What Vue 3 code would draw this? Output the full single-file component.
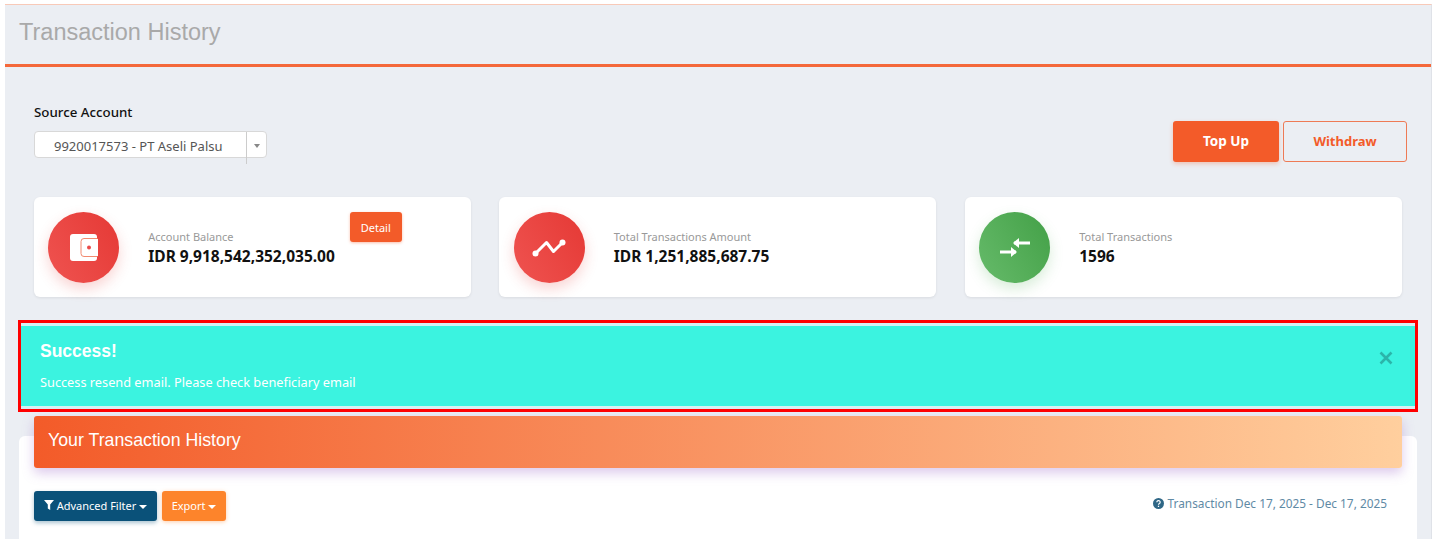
<script setup>
const stats = [
  { label: "Account Balance", value: "IDR 9,918,542,352,035.00", tone: "red", icon: "wallet", detail: true },
  { label: "Total Transactions Amount", value: "IDR 1,251,885,687.75", tone: "red", icon: "line" },
  { label: "Total Transactions", value: "1596", tone: "green", icon: "swap" },
];
</script>

<template>
  <div class="page">
    <div class="frame">
      <header class="top-bar">
        <h1>Transaction History</h1>
      </header>

      <section class="source-row">
        <div class="source">
          <label>Source Account</label>
          <div class="select">
            <span class="select-text">9920017573 - PT Aseli Palsu</span>
            <span class="select-arrow"><i></i></span>
          </div>
        </div>
        <div class="actions">
          <button class="btn-top">Top Up</button>
          <button class="btn-withdraw">Withdraw</button>
        </div>
      </section>

      <section class="stats">
        <div v-for="s in stats" :key="s.label" class="stat-card">
          <div class="stat-icon" :class="s.tone">
            <svg v-if="s.icon === 'wallet'" width="28" height="27" viewBox="0 0 28 27">
              <rect x="0" y="0" width="27" height="27" rx="3" fill="#fff" />
              <path d="M27.500 4.500H14a3 3 0 0 0-3 3v12a3 3 0 0 0 3 3h13.500" fill="none" stroke="#f28a70" stroke-width="1" />
              <rect x="27" y="5" width="1" height="17" fill="#fff" />
              <circle cx="19" cy="13.500" r="2" fill="#ea4a4a" />
            </svg>
            <svg v-else-if="s.icon === 'line'" width="34" height="20" viewBox="0 0 34 20">
              <polyline points="3.500,15.500 14.500,4.500 21.500,13.500 30.500,4.500" fill="none" stroke="#fff" stroke-width="3" stroke-linejoin="round" />
              <circle cx="3.500" cy="15.500" r="3" fill="#fff" />
              <circle cx="30.500" cy="4.500" r="3" fill="#fff" />
            </svg>
            <svg v-else width="32" height="22" viewBox="0 0 32 22">
              <path d="M31 6H15" fill="none" stroke="#fff" stroke-width="3" />
              <path d="M14 6l6-5v10z" fill="#fff" />
              <path d="M1 15h16" fill="none" stroke="#fff" stroke-width="3" />
              <path d="M18 15l-6-5v10z" fill="#fff" />
            </svg>
          </div>
          <div class="stat-body">
            <span class="stat-label">{{ s.label }}</span>
            <strong class="stat-value">{{ s.value }}</strong>
          </div>
          <button v-if="s.detail" class="btn-detail">Detail</button>
        </div>
      </section>

      <section class="alert-wrap">
        <div class="alert">
          <div class="alert-inner">
            <div>
              <h4>Success!</h4>
              <p>Success resend email. Please check beneficiary email</p>
            </div>
            <svg class="alert-close" width="14" height="14" viewBox="0 0 14 14">
              <path d="M1.500 1.500l11 11M12.500 1.500l-11 11" stroke="#2bb5aa" stroke-width="2.600" fill="none" />
            </svg>
          </div>
        </div>
      </section>

      <section class="history">
        <div class="history-title">Your Transaction History</div>
        <div class="history-card">
          <div class="tools">
            <div class="tool-buttons">
              <button class="btn-filter">
                <svg width="10" height="10" viewBox="0 0 10 10">
                  <path d="M0 0h10L6.200 4.500V10L3.800 8.500V4.500z" fill="#fff" />
                </svg>
                Advanced Filter <i class="caret"></i>
              </button>
              <button class="btn-export">Export <i class="caret"></i></button>
            </div>
            <div class="period">
              <svg width="11" height="11" viewBox="0 0 12 12">
                <circle cx="6" cy="6" r="6" fill="#2f6786" />
                <path d="M4.200 4.600a1.800 1.800 0 1 1 2.800 1.500c-.7.400-1 .7-1 1.300" fill="none" stroke="#fff" stroke-width="1.300" />
                <rect x="5.300" y="8.400" width="1.400" height="1.400" fill="#fff" />
              </svg>
              <span>Transaction Dec 17, 2025 - Dec 17, 2025</span>
            </div>
          </div>
        </div>
      </section>
    </div>
  </div>
</template>

<style>
html,
body {
  margin: 0;
  background: #fff;
  overflow: hidden;
}
</style>

<style scoped>
.page {
  height: 544px;
  padding: 4px 2px 6px 5px;
  box-sizing: border-box;
  font-family: "Noto Sans", sans-serif;
  overflow: hidden;
}

.frame {
  height: 534px;
  background: #ebeef3;
  border-top: 1px solid #f8c9b8;
  border-right: 1px solid #dfe2e8;
  overflow: hidden;
}

.top-bar {
  height: 59px;
  border-bottom: 3px solid #f4683a;
  display: flex;
  align-items: center;
}

.top-bar h1 {
  margin: 0 0 4px 14px;
  font-family: "Liberation Sans", sans-serif;
  font-weight: 400;
  font-size: 23.500px;
  color: #a9a9a9;
}

.source-row {
  display: flex;
  justify-content: space-between;
  padding: 36px 24px 0 29px;
  height: 95px;
  box-sizing: border-box;
}

.source label {
  display: block;
  font-size: 13.300px;
  font-weight: 500;
  line-height: 18px;
  color: #111;
  margin-bottom: 10px;
}

.select {
  width: 233px;
  height: 27px;
  background: #fff;
  border: 1px solid #d8d8d8;
  border-radius: 4px;
  box-sizing: border-box;
  display: flex;
  align-items: center;
}

.select-text {
  flex: 1;
  padding: 2px 0 0 19px;
  font-size: 13px;
  color: #555;
  white-space: nowrap;
}

.select-arrow {
  width: 20px;
  height: 32px;
  border-left: 1px solid #ccc;
  display: flex;
  justify-content: center;
  padding-top: 10px;
  box-sizing: border-box;
  align-self: flex-start;
}

.select-arrow i {
  width: 0;
  height: 0;
  margin-top: 2px;
  border-left: 3.500px solid transparent;
  border-right: 3.500px solid transparent;
  border-top: 4px solid #888;
}

.actions {
  display: flex;
  gap: 4px;
  padding-top: 18px;
  align-items: flex-start;
}

.actions button {
  height: 41px;
  padding-bottom: 2px;
  font-family: "Noto Sans", sans-serif;
  font-size: 13px;
  font-weight: 700;
  border-radius: 3px;
  cursor: pointer;
}

.actions .btn-top {
  width: 106px;
  background: #f35b29;
  color: #fff;
  border: none;
  font-size: 13.500px;
  box-shadow: 0 2px 4px rgba(244, 93, 43, 0.3);
}

.btn-withdraw {
  width: 124px;
  background: transparent;
  color: #f35b29;
  border: 1px solid #ee7a55;
}

.stats {
  display: grid;
  grid-template-columns: repeat(3, 437px);
  column-gap: 28.500px;
  margin: 35px 0 0 28.750px;
}

.stat-card {
  height: 100px;
  background: #fff;
  border-radius: 6px;
  box-shadow: 0 1px 3px rgba(0, 0, 0, 0.08);
  padding: 15px 14.500px;
  box-sizing: border-box;
  display: flex;
  position: relative;
}

.stat-icon {
  width: 71px;
  height: 71px;
  border-radius: 50%;
  flex-shrink: 0;
  display: flex;
  align-items: center;
  justify-content: center;
}

.stat-icon.red {
  background: linear-gradient(60deg, #ef5350, #e53935);
  box-shadow: 0 6px 14px rgba(229, 57, 53, 0.22);
}

.stat-icon.green {
  background: linear-gradient(60deg, #66bb6a, #43a047);
  box-shadow: 0 6px 14px rgba(76, 175, 80, 0.22);
}

.stat-body {
  margin-left: 29px;
  padding-top: 17px;
  display: flex;
  flex-direction: column;
}

.stat-label {
  font-size: 11px;
  line-height: 16px;
  color: #999;
}

.stat-value {
  font-size: 15.500px;
  line-height: 22px;
  font-weight: 700;
  color: #111;
}

.btn-detail {
  position: absolute;
  top: 15px;
  left: 316px;
  width: 52px;
  height: 30px;
  background: #f35b29;
  color: #fff;
  border: none;
  border-radius: 3px;
  font-family: "Noto Sans", sans-serif;
  font-size: 11px;
  box-shadow: 0 1px 3px rgba(244, 93, 43, 0.4);
}

.alert-wrap {
  padding: 23px 13px 0 13px;
}

.alert {
  width: 1400px;
  height: 92px;
  border: 3px solid #f00;
  box-sizing: border-box;
  background: #d5f0f3;
  padding: 3px 0;
}

.alert-inner {
  height: 100%;
  background: #3bf3e0;
  color: #fff;
  display: flex;
  justify-content: space-between;
  padding: 0 22px 0 19px;
  box-sizing: border-box;
}

.alert-inner h4 {
  margin: 14px 0 0;
  font-family: "Liberation Sans", sans-serif;
  font-size: 17.500px;
  line-height: 22px;
  font-weight: 700;
}

.alert-inner p {
  margin: 11px 0 0;
  font-size: 12.750px;
  line-height: 18px;
}

.alert-close {
  margin-top: 25px;
}

.history {
  padding: 4px 0 0 14px;
}

.history-title {
  position: relative;
  z-index: 1;
  width: 1368px;
  height: 52px;
  margin-left: 15px;
  padding-left: 14px;
  box-sizing: border-box;
  background: linear-gradient(90deg, #f35b29, #ffcf9e);
  border-radius: 3px;
  box-shadow: 0 5px 12px rgba(156, 100, 200, 0.35);
  color: #fff;
  font-family: "Liberation Sans", sans-serif;
  font-size: 17.750px;
  line-height: 48px;
}

.history-card {
  width: 1398px;
  margin-top: -32px;
  height: 110px;
  background: #fff;
  border-radius: 6px 6px 0 0;
  padding: 55px 30px 0 15px;
  box-sizing: border-box;
}

.tools {
  display: flex;
  justify-content: space-between;
  align-items: flex-start;
}

.tool-buttons {
  display: flex;
  gap: 5px;
}

.tool-buttons button {
  height: 30px;
  border: none;
  border-radius: 3px;
  color: #fff;
  font-family: "Noto Sans", sans-serif;
  font-size: 11px;
  padding: 0 0 1px;
}

.btn-filter {
  width: 123px;
  background: #0a5179;
  box-shadow: 0 2px 4px rgba(10, 81, 121, 0.35);
}

.btn-export {
  width: 64px;
  background: #fd842b;
  box-shadow: 0 1px 4px rgba(253, 132, 43, 0.4);
}

.caret {
  display: inline-block;
  width: 0;
  height: 0;
  vertical-align: middle;
  border-left: 4px solid transparent;
  border-right: 4px solid transparent;
  border-top: 4px solid #fff;
}

.period {
  display: flex;
  align-items: center;
  gap: 4px;
  margin-top: 4px;
  font-size: 11.850px;
  color: #5f8aa5;
}
</style>
